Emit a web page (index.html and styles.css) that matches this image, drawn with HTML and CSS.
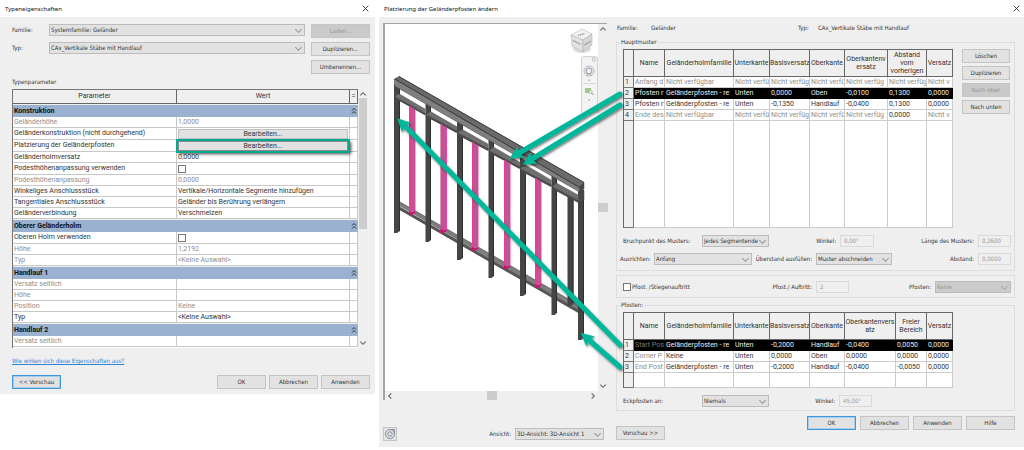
FILE: index.html
```html
<!DOCTYPE html>
<html lang="de">
<head>
<meta charset="utf-8">
<title>Geländer – Typeneigenschaften</title>
<link rel="stylesheet" href="styles.css">
</head>
<body>
<svg class="defs" aria-hidden="true"><symbol id="fold" viewBox="0 0 6 8"><path d="M1 3.500l2-2 2 2M1 6.500l2-2 2 2"/></symbol></svg>
<main class="desk">
<section class="dialog dialog-type">
  <header class="titlebar"><h1>Typeneigenschaften</h1><button class="close" aria-label="Schließen"><svg viewBox="0 0 8 8"><path d="M1.5 1.5l5 5M6.5 1.5l-5 5"/></svg></button></header>
  <div class="type-body">
    <div class="type-head">
      <label for="fam">Familie:</label>
      <span class="sel"><select id="fam"><option>Systemfamilie: Geländer</option></select></span>
      <button class="btn" disabled>Laden...</button>
      <label for="typ">Typ:</label>
      <span class="sel"><select id="typ"><option>CAx_Vertikale Stäbe mit Handlauf</option></select></span>
      <button class="btn">Duplizieren...</button>
      <button class="btn rename">Umbenennen...</button>
    </div>
    <h2 class="caption">Typenparameter</h2>
    <div class="param-box">
      <div class="param-scroll">
      <table class="params">
        <colgroup><col class="p-name"><col class="p-val"><col class="p-eq"></colgroup>
        <thead><tr><th>Parameter</th><th>Wert</th><th>=</th></tr></thead>
        <tbody>
          <tr class="band"><th colspan="2">Konstruktion</th><td><svg class="fold"><use href="#fold"/></svg></td></tr>
          <tr class="off"><td>Geländerhöhe</td><td>1,0000</td><td></td></tr>
          <tr class="ctl"><td>Geländerkonstruktion (nicht durchgehend)</td><td><button class="cell-btn">Bearbeiten...</button></td><td></td></tr>
          <tr class="ctl"><td>Platzierung der Geländerpfosten</td><td class="mark"><button class="cell-btn marked">Bearbeiten...</button></td><td></td></tr>
          <tr><td>Geländerholmversatz</td><td>0,0000</td><td></td></tr>
          <tr class="ctl"><td><label for="podest">Podesthöhenanpassung verwenden</label></td><td><input type="checkbox" id="podest"></td><td></td></tr>
          <tr class="off"><td>Podesthöhenanpassung</td><td>0,0000</td><td></td></tr>
          <tr><td>Winkeliges Anschlussstück</td><td>Vertikale/Horizontale Segmente hinzufügen</td><td></td></tr>
          <tr><td>Tangentiales Anschlussstück</td><td>Geländer bis Berührung verlängern</td><td></td></tr>
          <tr><td>Geländerverbindung</td><td>Verschmelzen</td><td></td></tr>
        </tbody>
        <tbody>
          <tr class="band"><th colspan="2">Oberer Geländerholm</th><td><svg class="fold"><use href="#fold"/></svg></td></tr>
          <tr class="ctl"><td><label for="holm">Oberen Holm verwenden</label></td><td><input type="checkbox" id="holm"></td><td></td></tr>
          <tr class="off"><td>Höhe</td><td>1,2192</td><td></td></tr>
          <tr class="off"><td>Typ</td><td>&lt;Keine Auswahl&gt;</td><td></td></tr>
        </tbody>
        <tbody>
          <tr class="band"><th colspan="2">Handlauf 1</th><td><svg class="fold"><use href="#fold"/></svg></td></tr>
          <tr class="off"><td>Versatz seitlich</td><td></td><td></td></tr>
          <tr class="off"><td>Höhe</td><td></td><td></td></tr>
          <tr class="off"><td>Position</td><td>Keine</td><td></td></tr>
          <tr><td>Typ</td><td>&lt;Keine Auswahl&gt;</td><td></td></tr>
        </tbody>
        <tbody>
          <tr class="band"><th colspan="2">Handlauf 2</th><td><svg class="fold"><use href="#fold"/></svg></td></tr>
          <tr class="off"><td>Versatz seitlich</td><td></td><td></td></tr>
        </tbody>
      </table>
      </div>
      <div class="vbar"><svg class="chev" viewBox="0 0 6 6"><path d="M1 4l2-2 2 2"/></svg><i class="thumb-long"></i><svg class="chev" viewBox="0 0 6 6"><path d="M1 2l2 2 2-2"/></svg></div>
    </div>
    <a class="help" href="#">Wie wirken sich diese Eigenschaften aus?</a>
    <footer class="type-foot"><button class="btn focus">&lt;&lt; Vorschau</button><button class="btn push">OK</button><button class="btn">Abbrechen</button><button class="btn">Anwenden</button></footer>
  </div>
</section>

<section class="dialog dialog-posts">
  <header class="titlebar"><h1>Platzierung der Geländerpfosten ändern</h1><button class="close" aria-label="Schließen"><svg viewBox="0 0 8 8"><path d="M1.5 1.5l5 5M6.5 1.5l-5 5"/></svg></button></header>
  <div class="posts-body">
    <div class="preview">
      <div class="viewport">
        <svg class="scene" viewBox="385 24 213 367" role="img" aria-label="3D-Ansicht des Geländers">
          <g id="lower-rail">
            <path fill="#7d7d7d" d="M396 204L400 202L584 308L580 311Z"/><path d="M396 208V204.500L580 310.500V314Z" fill="#555"/>
            <path fill="none" stroke="#444" stroke-width=".6" d="M400 202L584 308"/>
          </g>
          <g id="posts">
            <path fill="#454545" d="M394 84h6v147l-3 2h-3zM425.500 102h5.500v138l-2.500 2h-3zM457 120h6v138l-3 2h-3zM488.500 138h5.500v138l-2.500 2h-3zM520 156h6v138l-3 2h-3zM551.500 174h5.500v139l-2.500 2h-3zM567.500 196h6v108l-3 2h-3zM578 190h6v148l-3 2h-3z"/>
            <path stroke="#2c2c2c" stroke-width=".9" d="M399.500 86v145M430.500 104v136M462.500 122v136M493.500 140v136M525.500 158v136M556.500 175v138M573 196v107M583.500 190v148"/>
          </g>
          <g fill="#6f6f6f">
            <path d="M396 95L400 94L425.500 109V115L396 99Z"/>
            <path d="M427 114L431 111.500L457 126.500V132L427 117Z"/>
            <path d="M458 132L463 129.500L488.500 144V150L458 135Z"/>
            <path d="M490 150L494 147L520 162V168L490 153Z"/>
            <path d="M521 168L526 165L551.500 180V186L521 171Z"/>
            <path d="M553 186L557 183L584 198L579 202L553 189Z"/>
          </g>
          <path fill="none" stroke="#4a4a4a" stroke-width="2" d="M396 98L425.500 114.500M427 116L457 132M458 134L488.500 150M490 152L520 168M521 170L551.500 186M553 188L579 202"/>
          <g stroke="#444" stroke-width=".5">
            <path fill="#6a6a6a" d="M394.500 79L399 76.500L584 182.500L579.500 187.500Z"/>
            <path fill="#7f7f7f" d="M394.500 79L579.500 187.500V192L394.500 86Z"/>
            <path fill="#484848" d="M579.500 187L584 183V189L579.500 192Z"/>
            <path fill="#484848" d="M578.500 194L584 190.500V200L579 203Z"/>
          </g>
          <path fill="none" stroke="#3a3a3a" stroke-width=".9" d="M395 79L579.500 187.500L584 183M399 76.500L584 182.500"/>
          <g fill="#b65c8e">
            <path d="M409 106l6 3.500v103l-3 2.500h-3zM440.500 124l6 3.500v103l-3 2.500h-3zM472 142l6 3.500v103l-3 2.500h-3zM504 160l6 3.500v103l-3 2.500h-3zM535 178l6 3.500v104l-3 2.500h-3z"/>
          </g>
          <path stroke="#ff2fa0" stroke-width="1.400" d="M410 106v109M441.500 124v109M473 142v109M505 160v109M536 178v110"/>
          <path stroke="#ff2fa0" stroke-width=".9" d="M415 109.500v103M446.500 127.500v103M478 145.500v103M510 163.500v103M541 181.500v104"/>
          <path fill="#cb1273" d="M409 211l3 1.500 3-1v1.500l-3 2h-3zM440.500 229l3 1.500 3-1v1.500l-3 2h-3zM472 247l3 1.500 3-1v1.500l-3 2h-3zM504 265l3 1.500 3-1v1.500l-3 2h-3zM535 284l3 1.500 3-1v1.500l-3 2h-3z"/>
          <ellipse cx="582" cy="49" rx="9" ry="4" fill="#ddd"/>
          <g stroke="#aaa" stroke-width=".5">
            <path fill="#f3f3f3" d="M582 29L592 34L583 40L571 35Z"/>
            <path fill="#e2e2e2" d="M571 35L583 40V52L572 46Z"/>
            <path fill="#d6d6d6" d="M583 40L592 34V45L583 52Z"/>
          </g>
          <path fill="none" stroke="#8c8c8c" stroke-width="1.200" stroke-dasharray="1.200 .6" d="M578 35.500l7-2M573 40.500l8 4M584.500 45l6.500-4"/>
          <path fill="#f3f3f3" stroke="#c9c9c9" stroke-width=".8" d="M581.500 113V59a2.500 2.500 0 0 1 2.500-2.500h11a2.500 2.500 0 0 1 2.500 2.500V113"/>
          <circle cx="593.800" cy="59.500" r="1.600" fill="#fff" stroke="#999" stroke-width=".7"/>
          <g fill="#f0f2f5" stroke="#a5abb3"><circle cx="589" cy="71" r="5" stroke-width=".8"/><circle cx="589" cy="71" r="2.800" stroke-width="1.200"/><path d="M586 76l2-2h2l2 2" fill="none" stroke-width=".7"/></g>
          <path fill="#888" d="M588 79.800h2.400l-1.200 1.200zM588 99.800h2.400l-1.200 1.200z"/>
          <path stroke="#d2d2d2" stroke-width=".8" d="M583 83.500h13"/>
          <path fill="#9ecb88" d="M585 88h6v5h-6z"/><circle cx="590.500" cy="92" r="1.700" fill="#eee" stroke="#999" stroke-width=".6"/><path stroke="#888" d="M591.700 93.200l1.800 1.800"/>
        </svg>
        <div class="vbar"><svg class="chev" viewBox="0 0 6 6"><path d="M1 4l2-2 2 2"/></svg><i class="thumb"></i><svg class="chev" viewBox="0 0 6 6"><path d="M1 2l2 2 2-2"/></svg></div>
        <div class="hbar"><svg class="chev" viewBox="0 0 6 6"><path d="M4 1L2 3l2 2"/></svg><i class="thumb"></i><svg class="chev" viewBox="0 0 6 6"><path d="M2 1l2 2-2 2"/></svg></div>
      </div>
      <div class="view-foot">
        <button class="wheel" aria-label="Steuerungsrad"><svg viewBox="0 0 12 12"><circle cx="6" cy="6" r="4.500"/><circle cx="6" cy="6" r="2.200"/><path d="M6 1.500h4.500V6"/></svg></button>
        <label for="ansicht">Ansicht:</label>
        <span class="sel"><select id="ansicht"><option>3D-Ansicht: 3D-Ansicht 1</option></select></span>
      </div>
    </div>

    <div class="settings">
      <p class="meta"><span>Familie:</span><span>Geländer</span><span>Typ:</span><span>CAx_Vertikale Stäbe mit Handlauf</span></p>
      <fieldset class="group">
        <legend>Hauptmuster</legend>
        <div class="pattern">
          <table class="grid">
            <colgroup><col class="c0"><col class="c1"><col class="c2"><col class="c3"><col class="c4"><col class="c5"><col class="c6"><col class="c7"><col class="c8"></colgroup>
            <thead><tr><th></th><th>Name</th><th>Geländerholmfamilie</th><th>Unterkante</th><th>Basisversatz</th><th>Oberkante</th><th>Oberkantenv<br>ersatz</th><th>Abstand vom vorherigen</th><th>Versatz</th></tr></thead>
            <tbody>
              <tr class="off"><th>1</th><td>Anfang d</td><td>Nicht verfügbar</td><td>Nicht verfü</td><td>Nicht verfüg</td><td>Nicht verfü</td><td>Nicht verfüg</td><td>Nicht verfüg</td><td>Nicht v</td></tr>
              <tr class="on"><th>2</th><td>Pfosten r</td><td>Geländerpfosten - re</td><td>Unten</td><td>0,0000</td><td>Oben</td><td>-0,0100</td><td>0,1300</td><td>0,0000</td></tr>
              <tr><th>3</th><td>Pfosten r</td><td>Geländerpfosten - re</td><td>Unten</td><td>-0,1350</td><td>Handlauf</td><td>-0,0400</td><td>0,1300</td><td>0,0000</td></tr>
              <tr class="off"><th>4</th><td>Ende des</td><td>Nicht verfügbar</td><td>Nicht verfü</td><td>Nicht verfüg</td><td>Nicht verfü</td><td>Nicht verfüg</td><td class="live">0,0000</td><td>Nicht v</td></tr>
              <tr class="rest-tall"><th></th><td></td><td></td><td></td><td></td><td></td><td></td><td></td><td></td></tr>
            </tbody>
          </table>
          <div class="stack"><button class="btn">Löschen</button><button class="btn">Duplizieren</button><button class="btn" disabled>Nach oben</button><button class="btn">Nach unten</button></div>
        </div>
        <div class="line line-break">
          <label for="bruch">Bruchpunkt des Musters:</label><span class="sel"><select id="bruch"><option>Jedes Segmentende</option></select></span>
          <label class="r" for="w1">Winkel:</label><input type="text" id="w1" value="0,00°" disabled>
          <label class="r" for="len">Länge des Musters:</label><input type="text" id="len" value="0,2600" disabled>
        </div>
        <div class="line line-align">
          <label for="aus">Ausrichten:</label><span class="sel"><select id="aus"><option>Anfang</option></select></span>
          <label class="r" for="ueb">Überstand ausfüllen:</label><span class="sel"><select id="ueb"><option>Muster abschneiden</option></select></span>
          <label class="r" for="abs">Abstand:</label><input type="text" id="abs" value="0,0000" disabled>
        </div>
      </fieldset>
      <fieldset class="group group-tread">
        <div class="line line-tread">
          <label class="check"><input type="checkbox">Pfost. /Stiegenauftritt</label>
          <label class="r" for="auf">Pfost./ Auftritt:</label><input type="text" id="auf" value="2" disabled>
          <label class="r" for="pf">Pfosten:</label><span class="sel sel-off"><select id="pf" disabled><option>Keine</option></select></span>
        </div>
      </fieldset>
      <fieldset class="group group-posts">
        <legend>Pfosten:</legend>
        <div class="pattern">
          <table class="grid">
            <colgroup><col class="c0"><col class="c1"><col class="c2"><col class="c3"><col class="c4"><col class="c5"><col class="d6"><col class="d7"><col class="c8"></colgroup>
            <thead><tr><th></th><th>Name</th><th>Geländerholmfamilie</th><th>Unterkante</th><th>Basisversatz</th><th>Oberkante</th><th>Oberkantenvers<br>atz</th><th>Freier Bereich</th><th>Versatz</th></tr></thead>
            <tbody>
              <tr class="on"><th>1</th><td class="dim">Start Post</td><td>Geländerpfosten - re</td><td>Unten</td><td>-0,2000</td><td>Handlauf</td><td>-0,0400</td><td>0,0050</td><td>0,0000</td></tr>
              <tr><th>2</th><td class="dim">Corner P</td><td>Keine</td><td>Unten</td><td>0,0000</td><td>Oben</td><td>0,0000</td><td>0,0000</td><td>0,0000</td></tr>
              <tr><th>3</th><td class="dim">End Post</td><td>Geländerpfosten - re</td><td>Unten</td><td>-0,2000</td><td>Handlauf</td><td>-0,0400</td><td>-0,0050</td><td>0,0000</td></tr>
              <tr class="rest"><th></th><td></td><td></td><td></td><td></td><td></td><td></td><td></td><td></td></tr>
            </tbody>
          </table>
        </div>
        <div class="line line-corner">
          <label for="eck">Eckpfosten an:</label><span class="sel"><select id="eck"><option>Niemals</option></select></span>
          <label class="r" for="w2">Winkel:</label><input type="text" id="w2" value="45,00°" disabled>
        </div>
      </fieldset>
      <footer class="posts-foot"><button class="btn low">Vorschau &gt;&gt;</button><button class="btn focus push">OK</button><button class="btn">Abbrechen</button><button class="btn">Anwenden</button><button class="btn">Hilfe</button></footer>
    </div>
  </div>
</section>

<svg class="arrows" viewBox="0 0 1024 450" aria-hidden="true">
  <defs>
    <marker id="head" markerUnits="userSpaceOnUse" markerWidth="16" markerHeight="16" refX="2" refY="8" orient="auto"><path d="M0 1.500L13 8L0 14.500L2 8Z" fill="#05b79b"/></marker>
    <filter id="shade" x="-5%" y="-5%" width="110%" height="115%"><feDropShadow dx="1" dy="1.500" stdDeviation=".8" flood-color="#000" flood-opacity=".55"/></filter>
  </defs>
  <g filter="url(#shade)" stroke="#05b79b" stroke-width="5" stroke-linecap="round">
    <path marker-end="url(#head)" d="M620 94L519 153"/>
    <path marker-end="url(#head)" d="M620 105L532 159"/>
    <path marker-end="url(#head)" d="M620 345L405 126"/>
    <path marker-end="url(#head)" d="M620 367L589 340"/>
  </g>
</svg>
</main>
</body>
</html>
```
FILE: styles.css
```css
* { box-sizing: border-box; }
body { margin: 0; background: #fff; color: #333; font: 6px/8px "DejaVu Sans Condensed", "DejaVu Sans", sans-serif; }
button, select, input { font: inherit; color: inherit; margin: 0; }
h1, h2, p { margin: 0; font-weight: normal; }
.defs { display: block; width: 0; height: 0; }

.desk { position: relative; display: flex; gap: 4px; align-items: flex-start; }
.dialog { background: #efefef; }
.dialog-type { flex: 0 0 375px; }
.dialog-posts { flex: 1; }
.titlebar { display: flex; justify-content: space-between; align-items: center; height: 17px; padding: 0 3px 0 5px; background: #fff; }
.titlebar h1 { font: 6px/10px "Noto Sans", sans-serif; color: #111; }
.close { display: flex; padding: 0; border: 0; background: none; }
.close svg { width: 9px; height: 9px; fill: none; stroke: #333; stroke-width: .8; }
.dialog-type .close { margin-right: 2px; }

.btn { height: 14px; padding: 0; border: 1px solid #c4c4c4; background: #e2e2e2; text-align: center; }
.btn:disabled { border-color: #c6c6c6; background: #cacaca; color: #949494; }
.focus { border-color: #3f97dc; box-shadow: inset 0 0 0 1px #a9cdea; }
.push { margin-left: auto; }

.sel { position: relative; display: flex; height: 12px; }
.sel select { flex: 1; min-width: 0; padding: 0 8px 0 1px; border: 1px solid #bcbcbc; border-radius: 0; background: #e2e2e2; appearance: none; opacity: 1; }
.sel::after { content: ""; position: absolute; right: 4px; top: 3px; width: 4px; height: 4px; border: solid #999; border-width: 0 1px 1px 0; transform: rotate(45deg); pointer-events: none; }
.sel-off select { background: #cbcbcb; color: #949494; }
.sel-off::after { border-color: #aaa; }
input[type="text"] { height: 12px; min-width: 0; width: 100%; padding: 0 3px 1px; border: 1px solid #dadada; background: #efefef; color: #999; }
input[type="checkbox"] { display: block; width: 8px; height: 8px; border: 1px solid #777; background: #fff; appearance: none; }
.chev { width: 8px; height: 8px; flex: none; fill: none; stroke: #666; stroke-width: .8; }

/* Typeneigenschaften */
.type-body { display: flex; flex-direction: column; padding: 7px 5px 5px 12px; }
.type-head { display: grid; grid-template-columns: 37px 1fr 59px; grid-auto-rows: 14px; row-gap: 4px; }
.type-head .sel { margin-right: 6px; }
.type-head label { line-height: 12px; }
.rename { grid-column: 3; }
.caption { margin: 3px 0; font-size: 6px; line-height: 9px; }
.param-box { display: flex; height: 259px; margin-right: 2px; }
.param-scroll { flex: 1; overflow: hidden; background: #fff; border-left: 1px solid #777; border-top: 1px solid #777; }
.params { width: 100%; table-layout: fixed; border-collapse: separate; border-spacing: 0; font: 7px/9px Roboto, sans-serif; }
.p-name { width: 164px; }
.p-eq { width: 8px; }
.params td, .params th { height: 11px; padding: 0 1px; border-right: 1px solid #c8c8c8; border-bottom: 1px solid #c8c8c8; text-align: left; white-space: nowrap; overflow: hidden; }
.params thead th { height: 14px; border-color: #666; background: #efefef; text-align: center; font-weight: normal; }
.params .band th, .params .band td { height: 13px; border-top: 1px solid #efefef; border-right: 0; border-bottom: 0; background: #9ab2d0; color: #111; }
.fold { display: block; width: 6px; height: 8px; fill: none; stroke: #111; stroke-width: .8; }
.params .ctl td { height: 12px; }
.params .mark { overflow: visible; }
.cell-btn { display: block; width: 100%; height: 10px; padding: 0; border: 1px solid #c0c0c0; background: #e2e2e2; line-height: 8px; }
.marked { position: relative; border-color: #8a8a8a; box-shadow: 0 0 0 2px #05a98f, 2px 2px 3px 1px #444; }
.off { color: #8e8e8e; }
.vbar { display: flex; flex-direction: column; align-items: center; justify-content: space-between; width: 10px; padding: 1px 0; background: #efefef; }
.thumb-long { width: 8px; height: 131px; margin-bottom: auto; background: #cdcdcd; }
.help { align-self: flex-start; margin: 8px 0 9px; line-height: 10px; color: #2f83d6; }
.type-foot { display: flex; gap: 3px; }
.type-foot .btn { width: 49px; }

/* Platzierung der Geländerpfosten */
.posts-body { display: flex; gap: 9px; padding: 6px 9px 6px 4px; }
.preview { flex: 0 0 224px; }
.viewport { display: grid; grid-template-columns: 1fr 9px; grid-template-rows: 1fr 9px; height: 377px; border-left: 2px solid #a5a5a5; border-top: 1px solid #a5a5a5; }
.scene { width: 100%; height: 100%; background: #fff; }
.viewport .vbar { width: 9px; }
.hbar { display: flex; align-items: center; justify-content: space-between; padding: 0 1px; background: #efefef; }
.thumb { width: 10px; height: 9px; background: #cdcdcd; }
.view-foot { display: flex; align-items: center; margin-top: 27px; }
.view-foot label { margin-left: auto; }
.view-foot .sel { width: 89px; margin: 0 3px 0 4px; }
.wheel { width: 14px; height: 14px; padding: 0; border: 1px solid #c4c4c4; background: #e2e2e2; }
.wheel svg { display: block; width: 12px; height: 12px; fill: none; stroke: #7d8795; stroke-width: .9; }

.settings { flex: 1; min-width: 0; }
.meta { display: grid; grid-template-columns: 34px 147px 20px 1fr; padding-left: 1px; line-height: 9px; }
.group { min-width: 0; margin: 6px 0 0; padding: 3px 3px 5px; border: 1px solid #dcdcdc; }
.group legend { padding: 0 1px; line-height: 8px; }
.group-tread { margin-top: 4px; padding: 5px 3px 4px; }
.group-posts { margin-top: 3px; padding-bottom: 3px; }
.pattern { display: flex; align-items: flex-start; gap: 9px; margin: 0 1px 7px 3px; }
.stack { display: flex; flex: 1; flex-direction: column; gap: 3px; }
.grid { flex: none; width: 330px; table-layout: fixed; border-collapse: separate; border-spacing: 0; border-left: 1px solid #666; border-top: 1px solid #666; background: #fff; font: 7px/9px Roboto, sans-serif; }
.c0 { width: 10px; } .c1 { width: 31px; } .c2 { width: 69px; } .c3 { width: 36px; } .c4 { width: 40px; }
.c5 { width: 35px; } .c6 { width: 43px; } .c7 { width: 39px; } .c8 { width: 26px; }
.d6 { width: 51px; } .d7 { width: 31px; }
.grid td, .grid th { height: 11px; padding: 0 0 0 1px; border-right: 1px solid #ccc; border-bottom: 1px solid #ccc; font-weight: normal; text-align: left; white-space: nowrap; overflow: hidden; }
.grid thead th { height: 27px; padding: 0; border-color: #666; background: #efefef; text-align: center; white-space: normal; line-height: 8px; }
.grid tbody th { border-color: #777; background: #efefef; color: #333; }
.grid .on td { border-color: #000; background: #000; color: #eee; }
.grid .dim { color: #8e8e8e; }
.grid .on .dim { color: #777; }
.grid .live { color: #333; }
.grid .rest td, .grid .rest th { height: 15px; }
.grid .rest-tall td, .grid .rest-tall th { height: 107px; }

.line { display: grid; align-items: center; }
.line + .line { margin-top: 6px; }
.line .r { padding-right: 4px; text-align: right; white-space: nowrap; }
.line-break { grid-template-columns: 82px 67px 71px 34px 1fr 33px; }
.line-break > label:first-child, .line-corner > label:first-child { padding-left: 3px; }
.line-align { grid-template-columns: 34px 98px 64px 76px 1fr 33px; }
.line-tread { grid-template-columns: 120px 76px 33px 1fr 76px; }
.line-corner { grid-template-columns: 82px 67px 70px 33px; }
.check { display: flex; align-items: center; gap: 1px; padding-left: 3px; }
.posts-foot { display: flex; gap: 4px; align-items: flex-start; margin-top: 5px; }
.posts-foot .btn { width: 49px; }
.posts-foot .low { margin-top: 10px; }

/* callout arrows lying across both dialogs */
.arrows { position: absolute; left: 0; top: 0; width: 1024px; height: 450px; pointer-events: none; }
```
